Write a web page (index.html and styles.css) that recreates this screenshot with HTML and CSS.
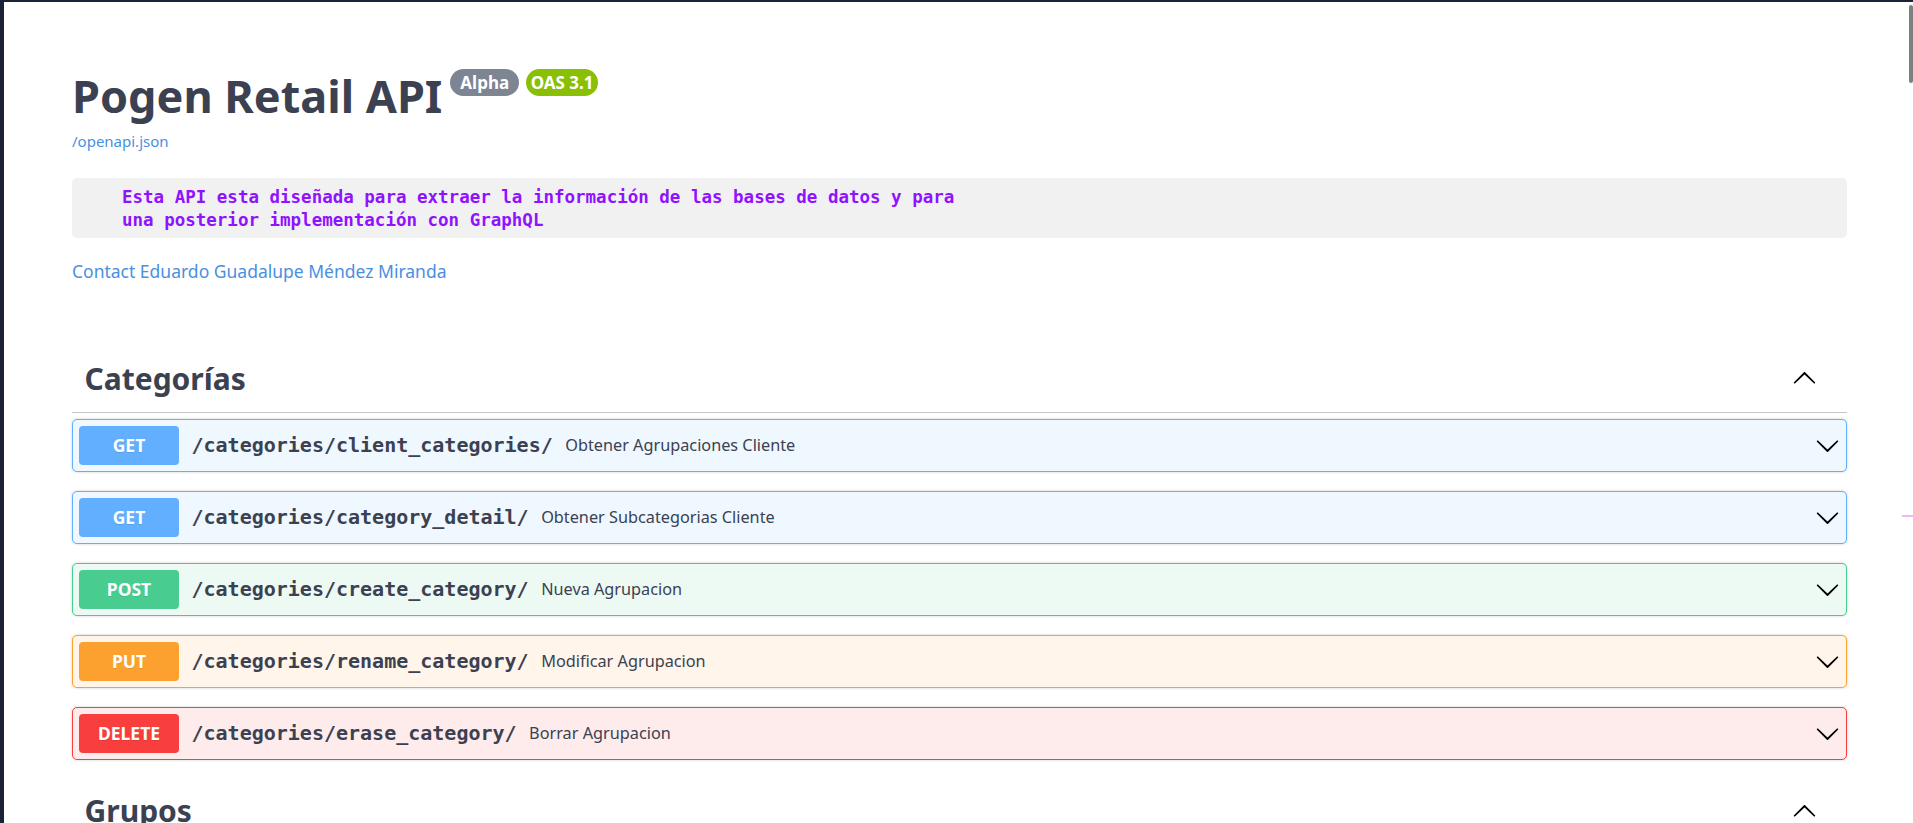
FILE: index.html
```html
<!DOCTYPE html>
<html lang="es">
<head>
<meta charset="utf-8">
<title>Pogen Retail API</title>
<link rel="stylesheet" href="styles.css">
</head>
<body>
<div class="window">
  <div class="wrapper">
    <section class="info">
      <div class="title-row">
        <h2 class="title">Pogen Retail API</h2>
        <span class="badge badge-version">Alpha</span>
        <span class="badge badge-oas">OAS 3.1</span>
      </div>
      <a class="url" href="#">/openapi.json</a>
      <pre class="description">Esta API esta diseñada para extraer la información de las bases de datos y para
una posterior implementación con GraphQL</pre>
      <a class="contact" href="#">Contact Eduardo Guadalupe Méndez Miranda</a>
    </section>

    <section class="tag-section">
      <div class="tag-header">
        <h3 class="tag-name">Categorías</h3>
        <svg class="arrow-up" viewBox="0 0 20 20" width="25" height="25"><path transform="rotate(180 10 10)" d="M17.418 6.109c.272-.268.709-.268.979 0s.271.701 0 .969l-7.908 7.83c-.27.268-.707.268-.979 0l-7.908-7.83c-.27-.268-.27-.701 0-.969.271-.268.709-.268.979 0L10 13.25l7.418-7.141z"/></svg>
      </div>
      <div class="op op-get">
        <span class="method">GET</span>
        <span class="path">/categories/client_categories/</span>
        <span class="summary">Obtener Agrupaciones Cliente</span>
        <svg class="arrow" viewBox="0 0 20 20" width="25" height="25"><path d="M17.418 6.109c.272-.268.709-.268.979 0s.271.701 0 .969l-7.908 7.83c-.27.268-.707.268-.979 0l-7.908-7.830c-.27-.268-.27-.701 0-.969.271-.268.709-.268.979 0L10 13.25l7.418-7.141z"/></svg>
      </div>
      <div class="op op-get">
        <span class="method">GET</span>
        <span class="path">/categories/category_detail/</span>
        <span class="summary">Obtener Subcategorias Cliente</span>
        <svg class="arrow" viewBox="0 0 20 20" width="25" height="25"><path d="M17.418 6.109c.272-.268.709-.268.979 0s.271.701 0 .969l-7.908 7.83c-.27.268-.707.268-.979 0l-7.908-7.83c-.27-.268-.27-.701 0-.969.271-.268.709-.268.979 0L10 13.25l7.418-7.141z"/></svg>
      </div>
      <div class="op op-post">
        <span class="method">POST</span>
        <span class="path">/categories/create_category/</span>
        <span class="summary">Nueva Agrupacion</span>
        <svg class="arrow" viewBox="0 0 20 20" width="25" height="25"><path d="M17.418 6.109c.272-.268.709-.268.979 0s.271.701 0 .969l-7.908 7.83c-.27.268-.707.268-.979 0l-7.908-7.83c-.27-.268-.27-.701 0-.969.271-.268.709-.268.979 0L10 13.25l7.418-7.141z"/></svg>
      </div>
      <div class="op op-put">
        <span class="method">PUT</span>
        <span class="path">/categories/rename_category/</span>
        <span class="summary">Modificar Agrupacion</span>
        <svg class="arrow" viewBox="0 0 20 20" width="25" height="25"><path d="M17.418 6.109c.272-.268.709-.268.979 0s.271.701 0 .969l-7.908 7.83c-.27.268-.707.268-.979 0l-7.908-7.83c-.27-.268-.27-.701 0-.969.271-.268.709-.268.979 0L10 13.25l7.418-7.141z"/></svg>
      </div>
      <div class="op op-delete">
        <span class="method">DELETE</span>
        <span class="path">/categories/erase_category/</span>
        <span class="summary">Borrar Agrupacion</span>
        <svg class="arrow" viewBox="0 0 20 20" width="25" height="25"><path d="M17.418 6.109c.272-.268.709-.268.979 0s.271.701 0 .969l-7.908 7.83c-.27.268-.707.268-.979 0l-7.908-7.83c-.27-.268-.27-.701 0-.969.271-.268.709-.268.979 0L10 13.25l7.418-7.141z"/></svg>
      </div>
    </section>

    <section class="tag-section next">
      <div class="tag-header">
        <h3 class="tag-name">Grupos</h3>
        <svg class="arrow-up" viewBox="0 0 20 20" width="25" height="25"><path transform="rotate(180 10 10)" d="M17.418 6.109c.272-.268.709-.268.979 0s.271.701 0 .969l-7.908 7.83c-.27.268-.707.268-.979 0l-7.908-7.83c-.27-.268-.27-.701 0-.969.271-.268.709-.268.979 0L10 13.25l7.418-7.141z"/></svg>
      </div>
    </section>
  </div>
  <div class="scroll-thumb"></div>
  <div class="edge-mark"></div>
</div>
</body>
</html>
```

FILE: styles.css
```css
html, body {
  margin: 0;
  padding: 0;
  height: 100%;
  overflow: hidden;
  background: #1b2237;
}

body {
  font-family: "Noto Sans", "Open Sans", sans-serif;
  color: #3b4151;
}

.window {
  position: relative;
  margin: 2px 0 0 4px;
  height: 821px;
  background: #fff;
  overflow: hidden;
}

.wrapper {
  width: 1775px;
  margin-left: 68px;
}

/* ---------- info ---------- */
.info {
  padding-top: 62.5px;
  padding-bottom: 63.4px;
}

.title-row {
  display: flex;
  align-items: flex-start;
}

.title {
  margin: 0;
  font-size: 45px;
  line-height: 61px;
  font-weight: 700;
  color: #3b4151;
}

.badge {
  margin-top: 4.5px;
  height: 27px;
  line-height: 27px;
  border-radius: 57px;
  font-size: 17px;
  font-weight: 700;
  color: #fff;
}

.badge-version {
  margin-left: 8px;
  padding: 0 10px;
  background: #7d8492;
}

.badge-oas {
  margin-left: 7px;
  padding: 0 4.5px;
  background: #89bf04;
}

.url {
  display: block;
  margin-top: 5px;
  font-size: 15px;
  line-height: 20px;
  color: #4990e2;
  text-decoration: none;
}

.description {
  margin: 27.5px 0 0;
  padding: 7.8px 10px 5.3px 50px;
  background: #f1f1f1;
  border-radius: 5px;
  font-family: "DejaVu Sans Mono", monospace;
  font-weight: 700;
  font-size: 17.5px;
  line-height: 23.3px;
  color: #9012fe;
  white-space: pre;
}

.contact {
  display: block;
  margin-top: 21px;
  font-size: 17.5px;
  line-height: 24px;
  color: #4990e2;
  text-decoration: none;
}

/* ---------- tag sections ---------- */
.tag-section.next {
  margin-top: 1px;
}

.tag-header {
  display: flex;
  align-items: center;
  padding: 12.5px 25px 12.5px 12.5px;
  border-bottom: 1px solid #c4c6cb;
  margin-bottom: 6px;
}

.tag-name {
  flex: 1;
  margin: 0;
  font-size: 30px;
  line-height: 40.5px;
  font-weight: 700;
  color: #3b4151;
}

.arrow-up {
  margin-right: 5px;
  fill: #000;
}

/* ---------- operations ---------- */
.op {
  display: flex;
  align-items: center;
  height: 53px;
  box-sizing: border-box;
  padding: 6px;
  margin-bottom: 19px;
  border: 1px solid;
  border-radius: 5px;
  box-shadow: 0 0 3px rgba(0, 0, 0, 0.19);
}

.method {
  width: 100px;
  height: 39px;
  line-height: 39px;
  border-radius: 4px;
  text-align: center;
  font-size: 17.5px;
  font-weight: 700;
  color: #fff;
  text-shadow: 0 1px 0 rgba(0, 0, 0, 0.1);
  flex: none;
}

.path {
  padding: 0 12.5px;
  font-family: "DejaVu Sans Mono", monospace;
  font-weight: 700;
  font-size: 20px;
  color: #3b4151;
}

.summary {
  flex: 1;
  font-size: 16.25px;
  color: #3b4151;
}

.arrow {
  flex: none;
  fill: #000;
}

.op-get { border-color: #61affe; background: #eff7ff; }
.op-get .method { background: #61affe; }

.op-post { border-color: #49cc90; background: #edfaf4; }
.op-post .method { background: #49cc90; }

.op-put { border-color: #fca130; background: #fff5ea; }
.op-put .method { background: #fca130; }

.op-delete { border-color: #f93e3e; background: #feecec; }
.op-delete .method { background: #f93e3e; }

/* ---------- overlay bits ---------- */
.scroll-thumb {
  position: absolute;
  top: 3px;
  right: 0;
  width: 4px;
  height: 78px;
  background: #7f7f7f;
  border-radius: 2px;
}

.edge-mark {
  position: absolute;
  top: 513px;
  right: 0;
  width: 11px;
  height: 1.5px;
  background: #f2b6f4;
}
```
